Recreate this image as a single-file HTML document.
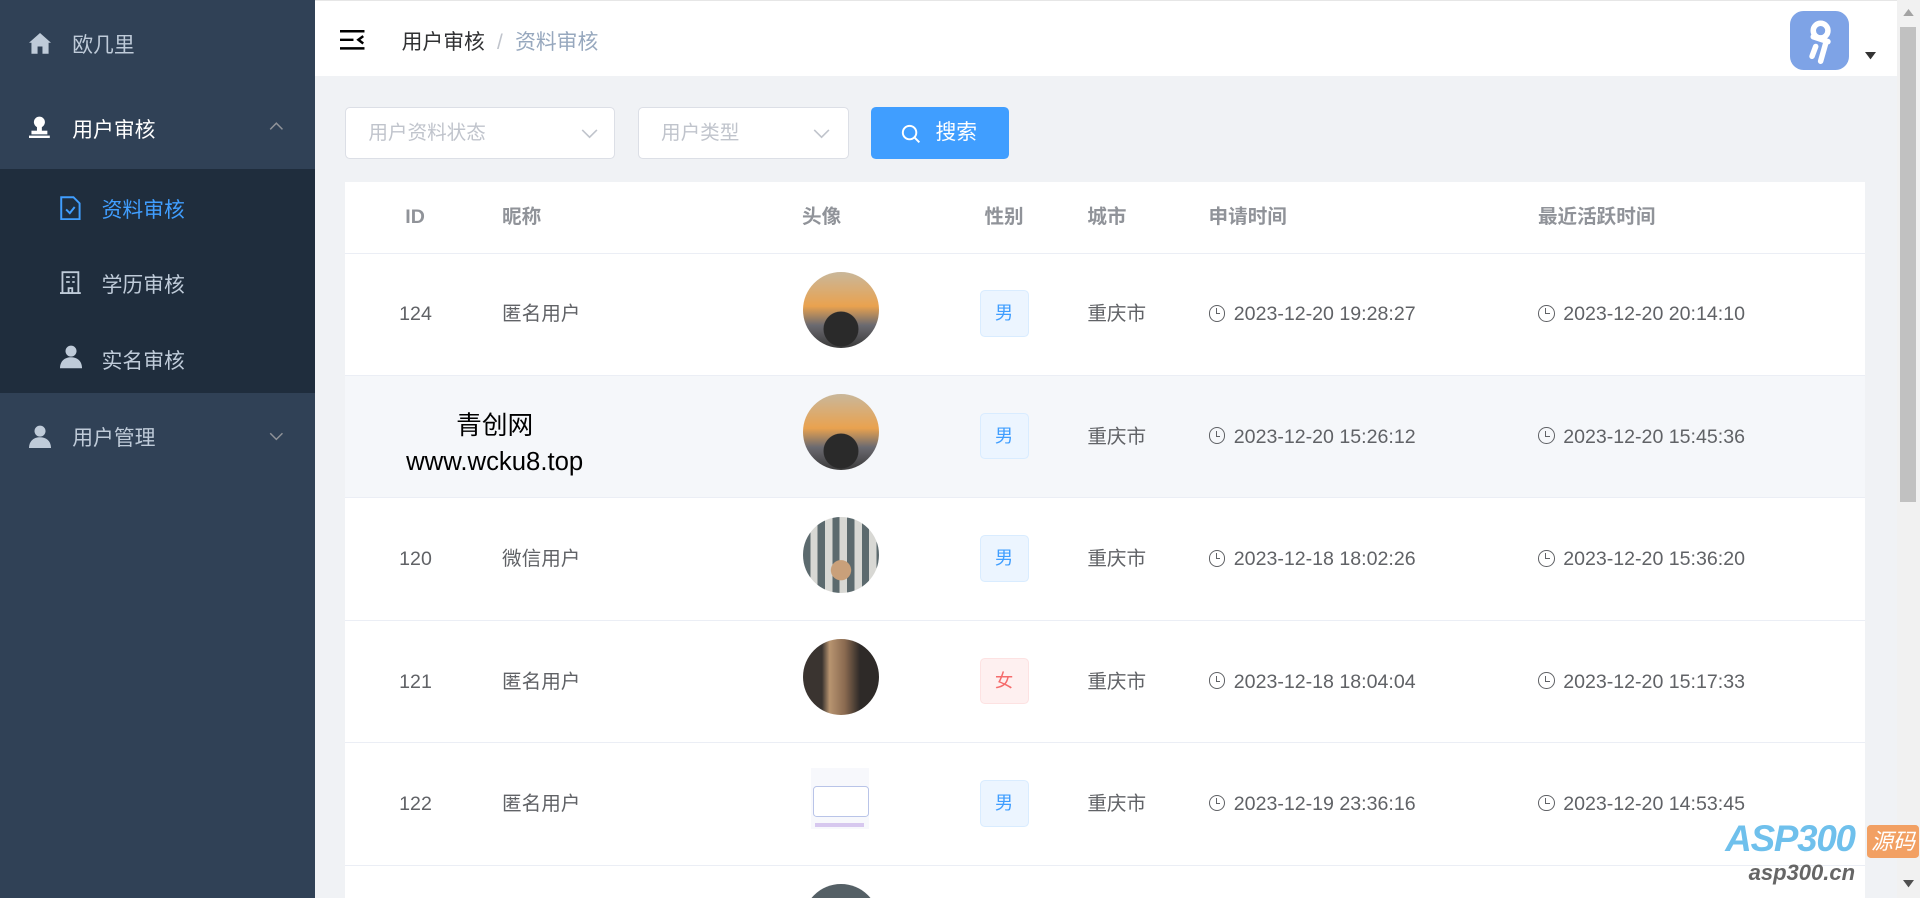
<!DOCTYPE html>
<html><head><meta charset="utf-8"><style>
html,body{margin:0;padding:0;width:1920px;height:898px;overflow:hidden;background:#f0f2f5}
#w{zoom:1.22449;width:1568px;height:733px;position:relative;font-family:"Liberation Sans","Noto Sans CJK SC",sans-serif;overflow:hidden;background:#f0f2f5}
.sb{position:absolute;left:0;top:0;width:257px;height:733px;background:#304156;color:#bfcbd9;font-size:17px}
.it{position:absolute;left:0;width:257px;display:flex;align-items:center}
.it svg{position:absolute}
.it span{position:absolute}
.sub{position:absolute;left:0;top:138px;width:257px;height:183px;background:#1f2d3d}
.hd{position:absolute;left:257px;top:0;width:1292px;height:62px;background:#fff;border-top:1px solid #e6e6e6;box-sizing:border-box}
.sel{position:absolute;top:87px;height:43px;background:#fff;border:1px solid #dcdfe6;border-radius:4px;box-sizing:border-box;color:#c0c4cc;font-size:16px;line-height:41px;padding-left:18px}
.sel svg{position:absolute;top:14px}
.btn{position:absolute;left:711px;top:87px;width:113px;height:43px;background:#409eff;border-radius:4px;color:#fff;font-size:17px;line-height:43px}
.tb{position:absolute;left:282px;top:149px;width:1241px;height:584px;background:#fff;overflow:hidden}
.row{position:absolute;left:0;width:1241px;height:100px;border-bottom:1px solid #ebeef5;box-sizing:border-box;color:#606266;font-size:16px}
.row>*{position:absolute}
.c{top:40px;line-height:20px}
.th{position:absolute;top:0;line-height:58px;color:#909399;font-weight:bold;font-size:16px}
.av{left:374px;top:15px;width:62px;height:62px;border-radius:50%}
.tag{left:518px;top:30px;width:40px;height:38px;border-radius:4px;box-sizing:border-box;font-size:15px;text-align:center;line-height:36px}
.m{background:#ecf5ff;border:1px solid #d9ecff;color:#409eff}
.f{background:#fef0f0;border:1px solid #fde2e2;color:#f56c6c}
.clk{display:inline-block;width:12px;height:12px;border:1.3px solid #606266;border-radius:50%;position:relative;vertical-align:-1px;margin-right:7px}
.clk:after{content:"";position:absolute;left:5px;top:2px;width:3px;height:4px;border-left:1.3px solid #606266;border-bottom:1.3px solid #606266}
</style></head><body><div id="w">
<div class="sb">
 <div class="it" style="top:0;height:70px"><svg style="left:24px;top:27px" width="18" height="17" viewBox="0 0 18 17"><path d="M9 0L0 8h2v9h5v-6h4v6h5V8h2z" fill="#bfcbd9"/></svg><span style="left:59px;top:23px">欧几里</span></div>
 <div class="it" style="top:70px;height:68px"><svg style="left:24px;top:25px" width="17" height="18" viewBox="0 0 17 18"><circle cx="8.5" cy="5" r="4.5" fill="#fff"/><rect x="6.5" y="8" width="4" height="5" fill="#fff"/><rect x="2" y="12" width="13" height="3" fill="#fff"/><rect x="0" y="16" width="17" height="2" fill="#fff"/></svg><span style="left:59px;top:22px;color:#fff">用户审核</span><svg style="left:220px;top:30px" width="12" height="7" viewBox="0 0 12 7"><path d="M1 6l5-5 5 5" stroke="#909399" fill="none" stroke-width="1.2"/></svg></div>
 <div class="sub"></div>
 <div class="it" style="top:138px;height:62px"><svg style="left:49px;top:22px" width="17" height="20" viewBox="0 0 17 20"><path d="M1 1h10l5 5v13H1z" stroke="#409eff" fill="none" stroke-width="1.6"/><path d="M5 11l3 3 4-5" stroke="#409eff" fill="none" stroke-width="1.6"/></svg><span style="left:83px;top:20px;color:#409eff">资料审核</span></div>
 <div class="it" style="top:200px;height:61px"><svg style="left:49px;top:21px" width="17" height="19" viewBox="0 0 17 19"><path d="M2 1h13v17H2zM0 18h17M5 5h3M10 5h2M5 9h3M10 9h2M7 14h3v4H7z" stroke="#bfcbd9" fill="none" stroke-width="1.5"/></svg><span style="left:83px;top:19px">学历审核</span></div>
 <div class="it" style="top:261px;height:60px"><svg style="left:49px;top:21px" width="18" height="19" viewBox="0 0 18 19"><circle cx="9" cy="5" r="4.5" fill="#bfcbd9"/><path d="M0 19c0-6 4-9 9-9s9 3 9 9z" fill="#bfcbd9"/></svg><span style="left:83px;top:20px">实名审核</span></div>
 <div class="it" style="top:321px;height:70px"><svg style="left:24px;top:26px" width="18" height="19" viewBox="0 0 18 19"><circle cx="9" cy="5" r="4.5" fill="#bfcbd9"/><path d="M0 19c0-6 4-9 9-9s9 3 9 9z" fill="#bfcbd9"/></svg><span style="left:59px;top:23px">用户管理</span><svg style="left:220px;top:32px" width="12" height="7" viewBox="0 0 12 7"><path d="M1 1l5 5 5-5" stroke="#909399" fill="none" stroke-width="1.2"/></svg></div>
</div>
<div class="hd">
 <svg style="position:absolute;left:21px;top:24px" width="20" height="16" viewBox="0 0 20 16"><path d="M0 1h20M0 8h11M0 15h20M19 5l-4 3 4 3" stroke="#000" fill="none" stroke-width="2"/></svg>
 <div style="position:absolute;left:71px;top:20px;font-size:17px;color:#303133">用户审核<span style="color:#c0c4cc;margin:0 10px">/</span><span style="color:#97a8be">资料审核</span></div>
 <div style="position:absolute;left:1205px;top:8px;width:48px;height:48px;border-radius:11px;background:#7ea3e6"><svg width="48" height="48" viewBox="0 0 48 48"><circle cx="25" cy="16" r="6" stroke="#fff" stroke-width="4.5" fill="none"/><path d="M19 21l12 4M29 27l-4 14M21 29l-3 8" stroke="#fff" stroke-width="4.5" stroke-linecap="round"/></svg></div>
 <svg style="position:absolute;left:1266px;top:42px" width="9" height="6"><path d="M0 0h9L4.5 6z" fill="#333"/></svg>
</div>
<div style="position:absolute;left:1549px;top:0;width:19px;height:733px;background:#f1f1f1"><div style="position:absolute;left:3px;top:22px;width:13px;height:388px;background:#c1c1c1"></div><svg style="position:absolute;left:5px;top:7px" width="9" height="6"><path d="M0 6h9L4.5 0z" fill="#a3a3a3"/></svg><svg style="position:absolute;left:5px;top:719px" width="9" height="6"><path d="M0 0h9L4.5 6z" fill="#505050"/></svg></div>
<div class="sel" style="left:282px;width:220px">用户资料状态<svg style="left:192px" width="14" height="14" viewBox="0 0 14 14"><path d="M1 4l6 6 6-6" stroke="#c0c4cc" fill="none" stroke-width="1.3"/></svg></div>
<div class="sel" style="left:521px;width:172px">用户类型<svg style="left:142px" width="14" height="14" viewBox="0 0 14 14"><path d="M1 4l6 6 6-6" stroke="#c0c4cc" fill="none" stroke-width="1.3"/></svg></div>
<div class="btn"><svg style="position:absolute;left:25px;top:14px" width="16" height="16" viewBox="0 0 16 16"><circle cx="7" cy="7" r="5.5" stroke="#fff" stroke-width="1.6" fill="none"/><path d="M11 11l4 4" stroke="#fff" stroke-width="1.6"/></svg><span style="position:absolute;left:53px">搜索</span></div>
<div class="tb">
 <div style="position:absolute;left:0;top:0;width:1241px;height:58px;border-bottom:1px solid #ebeef5"></div>
 <div class="th" style="left:49px">ID</div><div class="th" style="left:128px">昵称</div><div class="th" style="left:373px">头像</div><div class="th" style="left:522px">性别</div><div class="th" style="left:606px">城市</div><div class="th" style="left:705px">申请时间</div><div class="th" style="left:974px">最近活跃时间</div>
 <div class="row" style="top:58px"><div class="c" style="left:44px">124</div><div class="c" style="left:128px">匿名用户</div><div class="av" style="background:radial-gradient(circle at 50% 75%,#2a2a2a 0 25%,transparent 26%),linear-gradient(#c9b79a,#e9a24f 45%,#6b6a70 70%,#3a3a3a)"></div><div class="tag m">男</div><div class="c" style="left:606px">重庆市</div><div class="c" style="left:705px"><i class="clk"></i>2023-12-20 19:28:27</div><div class="c" style="left:974px"><i class="clk"></i>2023-12-20 20:14:10</div></div>
 <div class="row" style="top:158px;background:#f5f7fa"><div class="av" style="background:radial-gradient(circle at 50% 75%,#2a2a2a 0 25%,transparent 26%),linear-gradient(#c9b79a,#e9a24f 45%,#6b6a70 70%,#3a3a3a)"></div><div class="tag m">男</div><div class="c" style="left:606px">重庆市</div><div class="c" style="left:705px"><i class="clk"></i>2023-12-20 15:26:12</div><div class="c" style="left:974px"><i class="clk"></i>2023-12-20 15:45:36</div>
 <div style="left:37px;top:26px;font-size:21px;color:#000;text-align:center;line-height:30px;width:170px">青创网<br>www.wcku8.top</div></div>
 <div class="row" style="top:258px"><div class="c" style="left:44px">120</div><div class="c" style="left:128px">微信用户</div><div class="av" style="background:radial-gradient(circle at 50% 70%,#c9a07a 0 15%,transparent 16%),repeating-linear-gradient(90deg,#5c6a6e 0 6px,#d8d8d4 6px 12px)"></div><div class="tag m">男</div><div class="c" style="left:606px">重庆市</div><div class="c" style="left:705px"><i class="clk"></i>2023-12-18 18:02:26</div><div class="c" style="left:974px"><i class="clk"></i>2023-12-20 15:36:20</div></div>
 <div class="row" style="top:358px"><div class="c" style="left:44px">121</div><div class="c" style="left:128px">匿名用户</div><div class="av" style="background:linear-gradient(90deg,#3a3430 0 25%,#b89470 35%,#8a6a50 55%,#2e2a28 75%)"></div><div class="tag f">女</div><div class="c" style="left:606px">重庆市</div><div class="c" style="left:705px"><i class="clk"></i>2023-12-18 18:04:04</div><div class="c" style="left:974px"><i class="clk"></i>2023-12-20 15:17:33</div></div>
 <div class="row" style="top:458px"><div class="c" style="left:44px">122</div><div class="c" style="left:128px">匿名用户</div><div style="left:380px;top:20px;width:48px;height:50px;background:#f7f8fc"><div style="position:absolute;left:2px;top:15px;width:44px;height:24px;border:1px solid #b9c4e8;border-radius:3px;background:#fff"></div><div style="position:absolute;left:4px;top:45px;width:40px;height:3px;background:#d7c8ef"></div></div><div class="tag m">男</div><div class="c" style="left:606px">重庆市</div><div class="c" style="left:705px"><i class="clk"></i>2023-12-19 23:36:16</div><div class="c" style="left:974px"><i class="clk"></i>2023-12-20 14:53:45</div></div>
 <div class="row" style="top:558px"><div class="av" style="background:#556066"></div></div>
</div>
<div style="position:absolute;left:1409px;top:668px;font:italic bold 30px 'Liberation Sans',sans-serif;color:#6fc0ec;letter-spacing:-1px">ASP300</div>
<div style="position:absolute;left:1525px;top:674px;width:42px;height:27px;background:#f2a063;border-radius:3px;color:#fff;font-size:18px;line-height:27px;text-align:center;font-style:italic">源码</div>
<div style="position:absolute;left:1428px;top:702px;font:italic bold 18px 'Liberation Sans',sans-serif;color:#666">asp300.cn</div>
</div></body></html>
